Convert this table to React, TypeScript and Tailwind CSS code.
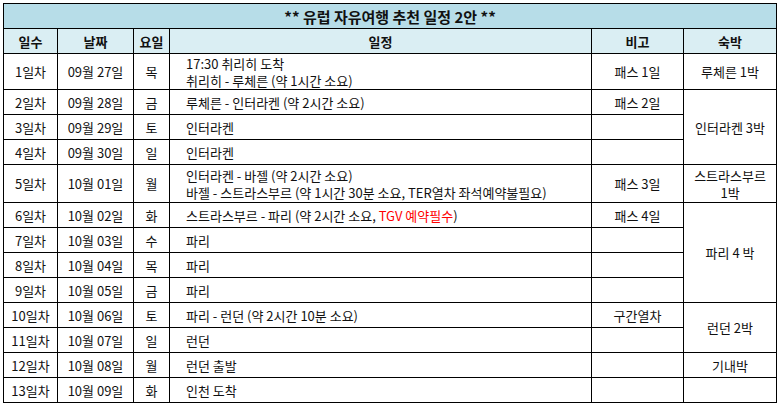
import React from "react";

type Row = {
  day: string;
  date: string;
  dow: string;
  plan: React.ReactNode;
  h: string;
};

const rows: Row[] = [
  { day: "1일차", date: "09월 27일", dow: "목", plan: (<><div>17:30 취리히 도착</div><div>취리히 - 루체른 (약 1시간 소요)</div></>), h: "h-[36px]" },
  { day: "2일차", date: "09월 28일", dow: "금", plan: "루체른 - 인터라켄 (약 2시간 소요)", h: "h-[25px]" },
  { day: "3일차", date: "09월 29일", dow: "토", plan: "인터라켄", h: "h-[25px]" },
  { day: "4일차", date: "09월 30일", dow: "일", plan: "인터라켄", h: "h-[25px]" },
  { day: "5일차", date: "10월 01일", dow: "월", plan: (<><div>인터라켄 - 바젤 (약 2시간 소요)</div><div>바젤 - 스트라스부르 (약 1시간 30분 소요, TER열차 좌석예약불필요)</div></>), h: "h-[38px]" },
  { day: "6일차", date: "10월 02일", dow: "화", plan: (<>스트라스부르 - 파리 (약 2시간 소요, <span className="text-[#ff0000]">TGV 예약필수</span>)</>), h: "h-[25px]" },
  { day: "7일차", date: "10월 03일", dow: "수", plan: "파리", h: "h-[25px]" },
  { day: "8일차", date: "10월 04일", dow: "목", plan: "파리", h: "h-[25px]" },
  { day: "9일차", date: "10월 05일", dow: "금", plan: "파리", h: "h-[25px]" },
  { day: "10일차", date: "10월 06일", dow: "토", plan: "파리 - 런던 (약 2시간 10분 소요)", h: "h-[25px]" },
  { day: "11일차", date: "10월 07일", dow: "일", plan: "런던", h: "h-[25px]" },
  { day: "12일차", date: "10월 08일", dow: "월", plan: "런던 출발", h: "h-[25px]" },
  { day: "13일차", date: "10월 09일", dow: "화", plan: "인천 도착", h: "h-[25px]" },
];

const note: Record<number, string> = { 0: "패스 1일", 1: "패스 2일", 4: "패스 3일", 5: "패스 4일", 9: "구간열차" };

const stay: Record<number, { span: number; text: React.ReactNode }> = {
  0: { span: 1, text: "루체른 1박" },
  1: { span: 3, text: "인터라켄 3박" },
  4: { span: 1, text: (<><div>스트라스부르</div><div>1박</div></>) },
  5: { span: 4, text: "파리 4 박" },
  9: { span: 2, text: "런던 2박" },
  11: { span: 1, text: "기내박" },
  12: { span: 1, text: "" },
};

const cell = "border border-black p-0 align-middle";

export default function App() {
  return (
    <div className="bg-white w-[778px] h-[405px] pt-[3px] pl-[3px] text-[#111] text-[13px] leading-[17px]" style={{ fontFamily: '"Malgun Gothic", "Noto Sans CJK KR", "Noto Sans", sans-serif' }}>
      <table className="table-fixed border-collapse w-[774px] border border-black">
        <colgroup>
          <col className="w-[54px]" />
          <col className="w-[76px]" />
          <col className="w-[36px]" />
          <col className="w-[422px]" />
          <col className="w-[92px]" />
          <col className="w-[93px]" />
        </colgroup>
        <tbody>
          <tr className="h-[25px]">
            <td colSpan={6} className={`${cell} bg-[#b7dde8] text-center text-[15px] font-semibold`}>
              ** 유럽 자유여행 추천 일정 2안 **
            </td>
          </tr>
          <tr className="h-[25px]">
            {["일수", "날짜", "요일", "일정", "비고", "숙박"].map((t) => (
              <td key={t} className={`${cell} bg-[#daeef3] text-center font-semibold`}>{t}</td>
            ))}
          </tr>
          {rows.map((r, i) => (
            <tr key={i} className={r.h}>
              <td className={`${cell} text-center`}>{r.day}</td>
              <td className={`${cell} text-center`}>{r.date}</td>
              <td className={`${cell} text-center`}>{r.dow}</td>
              <td className={`${cell} text-left pl-[16px] whitespace-nowrap`}>{r.plan}</td>
              <td className={`${cell} text-center`}>{note[i] ?? ""}</td>
              {stay[i] && (
                <td rowSpan={stay[i].span} className={`${cell} text-center`}>{stay[i].text}</td>
              )}
            </tr>
          ))}
        </tbody>
      </table>
    </div>
  );
}
